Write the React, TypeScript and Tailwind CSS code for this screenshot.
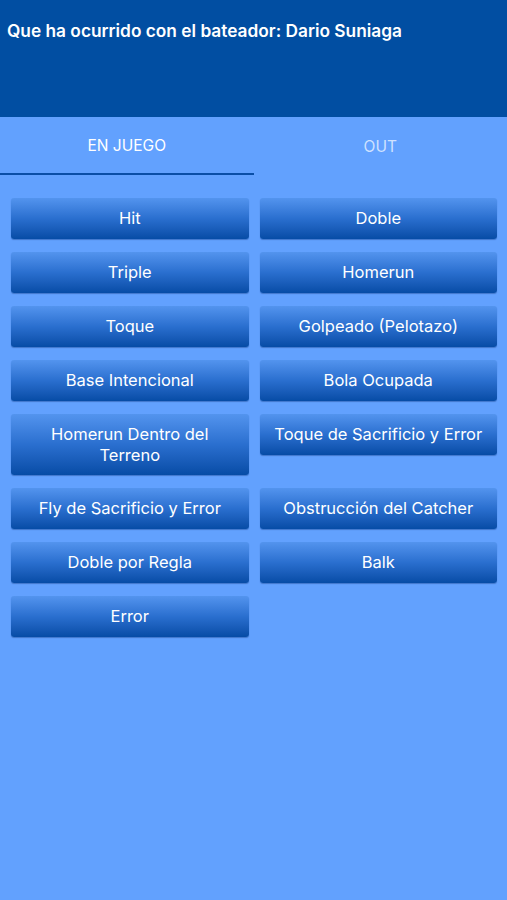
import React from 'react'

const enJuego: string[][] = [
  ['Hit', 'Doble'],
  ['Triple', 'Homerun'],
  ['Toque', 'Golpeado (Pelotazo)'],
  ['Base Intencional', 'Bola Ocupada'],
  ['Homerun Dentro del Terreno', 'Toque de Sacrificio y Error'],
  ['Fly de Sacrificio y Error', 'Obstrucción del Catcher'],
  ['Doble por Regla', 'Balk'],
  ['Error'],
]

function PlayButton({ label }: { label: string }) {
  return (
    <button className="w-full min-h-[41px] px-3 py-[10px] rounded-[3px] text-white text-[16.5px] leading-[20.5px] text-center bg-gradient-to-b from-[#5394ee] via-[#2a6fcf] to-[#064ca6] shadow-[0_1px_1px_rgba(0,40,110,0.35)]">
      {label}
    </button>
  )
}

export default function App() {
  return (
    <div className="min-h-[900px] bg-[#62a1fe] font-['Inter','Roboto',sans-serif]">
      {/* Header */}
      <div className="h-[117px] bg-[#014ea2] px-[7px] pt-[20px]">
        <p className="text-white text-[17.3px] font-semibold leading-[22px]">
          Que ha ocurrido con el bateador: Dario Suniaga
        </p>
      </div>

      {/* Tabs */}
      <div className="flex h-[59px]">
        <div className="flex-1 flex flex-col">
          <div className="flex-1 flex items-center justify-center text-white text-[15.5px] pt-[2px]">EN JUEGO</div>
          <div className="h-[2px] mb-[1px] bg-[#0a4ea6]" />
        </div>
        <div className="flex-1 flex items-center justify-center text-[#cfe1ff] text-[15.5px] pt-[1px]">OUT</div>
      </div>

      {/* Buttons */}
      <div className="grid grid-cols-2 gap-x-[11px] gap-y-[13px] items-start pl-[11px] pr-[10px] pt-[22px]">
        {enJuego.flatMap((row, i) =>
          row.map((label, j) => <PlayButton key={`${i}-${j}`} label={label} />)
        )}
      </div>
    </div>
  )
}
